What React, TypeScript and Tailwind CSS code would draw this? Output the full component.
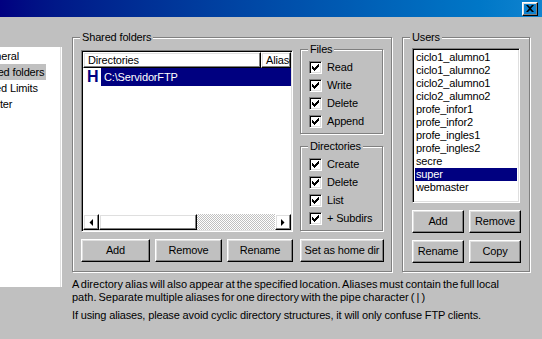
import React from "react";

const raised =
  "border border-t-white border-l-white border-r-black border-b-black shadow-[inset_-1px_-1px_0_#808080,inset_1px_1px_0_#dfdfdf]";
const sunken =
  "border border-t-[#808080] border-l-[#808080] border-r-white border-b-white shadow-[inset_1px_1px_0_#000,inset_-1px_-1px_0_#dfdfdf]";

const users = [
  "ciclo1_alumno1",
  "ciclo1_alumno2",
  "ciclo2_alumno1",
  "ciclo2_alumno2",
  "profe_infor1",
  "profe_infor2",
  "profe_ingles1",
  "profe_ingles2",
  "secre",
  "super",
  "webmaster",
];

function Group({
  label,
  className,
  children,
}: {
  label: string;
  className: string;
  children?: React.ReactNode;
}) {
  return (
    <div
      className={`relative shrink-0 border border-[#808080] shadow-[inset_1px_1px_0_#fff,1px_1px_0_#fff] ${className}`}
    >
      <span className="absolute -top-[7px] left-[7px] bg-[#c0c0c0] px-[2px] leading-[13px]">
        {label}
      </span>
      {children}
    </div>
  );
}

function Button({ label, className }: { label: string; className: string }) {
  return (
    <div
      className={`${raised} flex h-[23px] shrink-0 items-center justify-center ${className}`}
    >
      {label}
    </div>
  );
}

function Check({ label }: { label: string }) {
  return (
    <div className="flex h-[18px] items-center">
      <div
        className={`${sunken} flex h-[13px] w-[13px] shrink-0 items-center justify-center bg-white`}
      >
        <svg width="7" height="7" viewBox="0 0 7 7">
          <path
            d="M0 2h1v1h1v1h1v-1h1v-1h1v-1h1v-1h1v3h-1v1h-1v1h-1v1h-1v1h-1v-1h-1v-1h-1z"
            fill="#000"
          />
        </svg>
      </div>
      <span className="ml-[5px] whitespace-nowrap">{label}</span>
    </div>
  );
}

function Arrow({ dir }: { dir: "left" | "right" }) {
  return (
    <div className={`${raised} flex h-[16px] w-[16px] shrink-0 items-center justify-center`}>
      <svg width="4" height="7" viewBox="0 0 4 7">
        {dir === "left" ? (
          <path d="M4 0v7L0.5 3.5z" fill="#000" />
        ) : (
          <path d="M0 0v7l3.5-3.5z" fill="#000" />
        )}
      </svg>
    </div>
  );
}

export default function App() {
  return (
    <div className="relative h-[339px] w-[542px] overflow-hidden bg-[#c0c0c0] font-['Liberation_Sans',Arial,sans-serif] text-[11px] tracking-[-0.15px] text-black">
      {/* TITLE BAR */}
      <div className="flex h-[17px] items-center justify-end bg-gradient-to-r from-[#000080] to-[#1084d0] pr-[4px]">
        <div className={`${raised} flex h-[14px] w-[16px] items-center justify-center`}>
          <svg width="8" height="7" viewBox="0 0 8 7">
            <path
              d="M0 0h2l2 2 2-2h2l-3 3.5 3 3.5h-2l-2-2-2 2h-2l3-3.5z"
              fill="#000"
            />
          </svg>
        </div>
      </div>

      <div className="flex items-start">
        {/* PAGE TREE (scrolled, left part out of view) */}
        <div className="mt-[30px] h-[240px] w-[62px] shrink-0 overflow-hidden border-r border-r-white bg-white shadow-[inset_-1px_0_0_#dfdfdf]">
          <div className="pt-[1px] leading-[16px] whitespace-nowrap">
            <div className="-ml-[20px] w-fit px-[1px]">General</div>
            <div className="-ml-[26px] w-fit bg-[#c0c0c0] pl-[1px] pr-[2px]">Shared folders</div>
            <div className="-ml-[25px] w-fit px-[1px]">Speed Limits</div>
            <div className="-ml-[25px] w-fit px-[1px]">IP Filter</div>
          </div>
        </div>

        {/* SHARED FOLDERS */}
        <div className="ml-[10px] mt-[20px] w-[320px] shrink-0">
          <Group label="Shared folders" className="h-[235px] w-[320px] pl-[8px] pt-[11px]">
            <div className="flex items-start">
              <div className={`${sunken} mt-[1px] flex h-[182px] w-[212px] shrink-0 flex-col bg-white p-[1px]`}>
                <div className="flex h-[16px]">
                  <div className={`${raised} flex w-[178px] shrink-0 items-center pl-[4px]`}>
                    Directories
                  </div>
                  <div className={`${raised} flex flex-1 items-center overflow-hidden whitespace-nowrap pl-[4px]`}>
                    Aliases
                  </div>
                </div>
                <div className="flex-1">
                  <div className="flex h-[18px] items-center pl-[4px]">
                    <span className="w-[14px] text-[16px] font-bold leading-[16px] text-[#000080]">
                      H
                    </span>
                    <div className="flex h-[18px] flex-1 items-center bg-[#000080] pl-[3px] text-white">
                      C:\ServidorFTP
                    </div>
                  </div>
                </div>
                <div className="flex h-[16px]">
                  <Arrow dir="left" />
                  <div className={`${raised} w-[98px] shrink-0`} />
                  <div className="flex-1 bg-[length:2px_2px] bg-[image:repeating-conic-gradient(#c0c0c0_0_25%,#ffffff_0_50%)]" />
                  <Arrow dir="right" />
                </div>
              </div>

              <div className="ml-[7px] shrink-0">
                <Group label="Files" className="h-[85px] w-[83px] pl-[8px] pt-[8px]">
                  <Check label="Read" />
                  <Check label="Write" />
                  <Check label="Delete" />
                  <Check label="Append" />
                </Group>
                <Group label="Directories" className="mt-[12px] h-[85px] w-[83px] pl-[8px] pt-[8px]">
                  <Check label="Create" />
                  <Check label="Delete" />
                  <Check label="List" />
                  <Check label="+ Subdirs" />
                </Group>
              </div>
            </div>

            <div className="mt-[7px] flex">
              <Button label="Add" className="w-[69px]" />
              <Button label="Remove" className="ml-[5px] w-[67px]" />
              <Button label="Rename" className="ml-[5px] w-[66px]" />
              <Button label="Set as home dir" className="ml-[7px] w-[84px] whitespace-nowrap" />
            </div>
          </Group>

          <div className="mt-[6px] whitespace-nowrap leading-[13px]">
            <p className="tracking-[0px] [word-spacing:-1px]">
              A directory alias will also appear at the specified location. Aliases must contain the full local
              <br />
              path. Separate multiple aliases for one directory with the pipe character ( | )
            </p>
            <p className="mt-[5px]">
              If using aliases, please avoid cyclic directory structures, it will only confuse FTP clients.
            </p>
          </div>
        </div>

        {/* USERS */}
        <Group label="Users" className="ml-[10px] mt-[20px] h-[235px] w-[128px] pl-[9px] pt-[10px]">
          <div className={`${sunken} h-[155px] w-[108px] bg-white px-[2px] py-[2px] leading-[13px]`}>
            {users.map((u) => (
              <div
                key={u}
                className={`pl-[1px] ${u === "super" ? "bg-[#000080] text-white" : ""}`}
              >
                {u}
              </div>
            ))}
          </div>
          <div className="mt-[7px] flex">
            <Button label="Add" className="w-[52px]" />
            <Button label="Remove" className="ml-[5px] w-[52px]" />
          </div>
          <div className="mt-[7px] flex">
            <Button label="Rename" className="w-[52px]" />
            <Button label="Copy" className="ml-[5px] w-[52px]" />
          </div>
        </Group>
      </div>
    </div>
  );
}
